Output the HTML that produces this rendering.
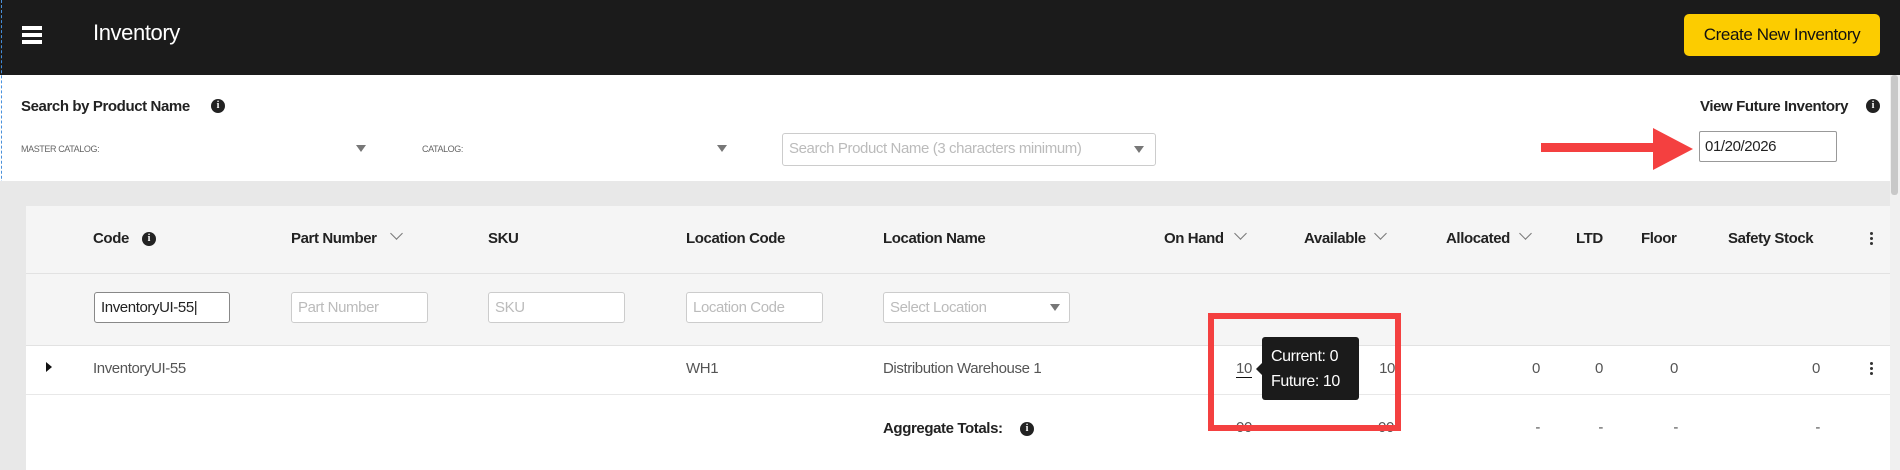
<!DOCTYPE html>
<html><head><meta charset="utf-8"><style>
*{box-sizing:border-box;margin:0;padding:0}
body{width:1900px;height:470px;overflow:hidden;background:#fff;font-family:"Liberation Sans",sans-serif;position:relative;color:#333;letter-spacing:-0.4px}
.a{position:absolute;white-space:nowrap}
.hdr{left:0;top:0;width:1900px;height:75px;background:#1b1b1b}
.th{font-size:15px;font-weight:bold;color:#222;top:230px}
.inp{position:absolute;height:31px;border:1px solid #ccc;border-radius:3px;background:#fff;font-size:15px;color:#bbb;padding:6px 6px;top:292px}
.cell{font-size:15px;color:#555;top:360px}
.tri{width:0;height:0;border-left:5px solid transparent;border-right:5px solid transparent;border-top:7px solid #777;position:absolute}
.info{position:absolute;width:14px;height:14px;border-radius:50%;background:#222;color:#fff;font-size:10px;font-weight:bold;text-align:center;line-height:14px;font-family:"Liberation Serif",serif;letter-spacing:0}
.chev{position:absolute;width:9px;height:9px;border-right:1.5px solid #777;border-bottom:1.5px solid #777;transform:rotate(45deg)}
.num{font-size:15px;color:#555;top:360px;text-align:right;width:40px}
.kb{position:absolute;width:3px}
.kb i{display:block;width:3px;height:3px;background:#333;margin-bottom:2px;border-radius:50%}
</style></head><body>
<div class="a hdr"></div>
<div class="a" style="left:1px;top:0;width:0;height:470px;border-left:1px dashed #4a90d9"></div>
<div class="a" style="left:22px;top:26px;width:20px;height:4px;background:#fff"></div>
<div class="a" style="left:22px;top:33px;width:20px;height:4px;background:#fff"></div>
<div class="a" style="left:22px;top:40px;width:20px;height:4px;background:#fff"></div>
<div class="a" style="left:93px;top:20px;font-size:22px;color:#fff">Inventory</div>
<div class="a" style="left:1684px;top:14px;width:196px;height:42px;background:#fccc00;border-radius:5px;font-size:17px;color:#111;text-align:center;line-height:42px">Create New Inventory</div>
<div class="a" style="left:1890px;top:75px;width:10px;height:395px;background:#f0f0f0"></div>
<div class="a" style="left:1891px;top:75px;width:7px;height:120px;background:#c8c8c8;border-radius:3px"></div>

<div class="a" style="left:21px;top:98px;font-size:15px;font-weight:bold;color:#222">Search by Product Name</div>
<div class="info" style="left:211px;top:99px">i</div>
<div class="a" style="left:21px;top:144px;font-size:9px;color:#666">MASTER CATALOG:</div>
<div class="tri" style="left:356px;top:145px"></div>
<div class="a" style="left:422px;top:144px;font-size:9px;color:#666">CATALOG:</div>
<div class="tri" style="left:717px;top:145px"></div>
<div class="inp" style="left:782px;top:133px;width:374px;height:33px">Search Product Name (3 characters minimum)</div>
<div class="tri" style="left:1134px;top:146px"></div>
<div class="a" style="left:1700px;top:98px;font-size:15px;font-weight:bold;color:#222">View Future Inventory</div>
<div class="info" style="left:1866px;top:99px">i</div>
<div class="a" style="left:1699px;top:131px;width:138px;height:31px;border:1px solid #999;border-radius:2px;font-size:15px;color:#222;padding:6px 5px">01/20/2026</div>
<div class="a" style="left:1541px;top:143px;width:115px;height:9px;background:#f44040"></div>
<div class="a" style="left:1653px;top:128px;width:0;height:0;border-top:21px solid transparent;border-bottom:21px solid transparent;border-left:40px solid #f44040"></div>

<div class="a" style="left:0;top:181px;width:1890px;height:289px;background:#e8e8e8"></div>
<div class="a" style="left:26px;top:206px;width:1864px;height:264px;background:#fff"></div>
<div class="a" style="left:26px;top:206px;width:1864px;height:139px;background:#f5f5f5"></div>
<div class="a" style="left:26px;top:273px;width:1864px;height:1px;background:#e2e2e2"></div>
<div class="a" style="left:26px;top:345px;width:1864px;height:1px;background:#e2e2e2"></div>
<div class="a" style="left:26px;top:394px;width:1864px;height:1px;background:#e8e8e8"></div>

<div class="a th" style="left:93px">Code</div><div class="info" style="left:142px;top:232px">i</div>
<div class="a th" style="left:291px">Part Number</div><div class="chev" style="left:392px;top:229px"></div>
<div class="a th" style="left:488px">SKU</div>
<div class="a th" style="left:686px">Location Code</div>
<div class="a th" style="left:883px">Location Name</div>
<div class="a th" style="left:1164px">On Hand</div><div class="chev" style="left:1236px;top:229px"></div>
<div class="a th" style="left:1304px">Available</div><div class="chev" style="left:1376px;top:229px"></div>
<div class="a th" style="left:1446px">Allocated</div><div class="chev" style="left:1521px;top:229px"></div>
<div class="a th" style="left:1576px">LTD</div>
<div class="a th" style="left:1641px">Floor</div>
<div class="a th" style="left:1728px">Safety Stock</div>
<div class="kb" style="left:1870px;top:232px"><i></i><i></i><i></i></div>

<div class="inp" style="left:94px;width:136px;border-color:#888;color:#222">InventoryUI-55|</div>
<div class="inp" style="left:291px;width:137px">Part Number</div>
<div class="inp" style="left:488px;width:137px">SKU</div>
<div class="inp" style="left:686px;width:137px">Location Code</div>
<div class="inp" style="left:883px;width:187px">Select Location</div>
<div class="tri" style="left:1050px;top:304px"></div>

<div class="a" style="left:46px;top:362px;width:0;height:0;border-top:5px solid transparent;border-bottom:5px solid transparent;border-left:6px solid #111"></div>
<div class="a cell" style="left:93px">InventoryUI-55</div>
<div class="a cell" style="left:686px">WH1</div>
<div class="a cell" style="left:883px">Distribution Warehouse 1</div>
<div class="a cell" style="left:1236px;border-bottom:1px solid #111;line-height:17px">10</div>
<div class="a num" style="left:1355px">10</div>
<div class="a num" style="left:1500px">0</div>
<div class="a num" style="left:1563px">0</div>
<div class="a num" style="left:1638px">0</div>
<div class="a num" style="left:1780px">0</div>
<div class="kb" style="left:1870px;top:362px"><i></i><i></i><i></i></div>

<div class="a" style="left:883px;top:420px;font-size:15px;font-weight:bold;color:#222">Aggregate Totals:</div>
<div class="info" style="left:1020px;top:422px">i</div>
<div class="a cell" style="left:1236px;top:419px">00</div>
<div class="a cell" style="left:1378px;top:419px">00</div>
<div class="a num" style="left:1500px;top:419px">-</div>
<div class="a num" style="left:1563px;top:419px">-</div>
<div class="a num" style="left:1638px;top:419px">-</div>
<div class="a num" style="left:1780px;top:419px">-</div>

<div class="a" style="left:1262px;top:337px;width:97px;height:63px;background:#1b1b1b;border-radius:3px;color:#fff;font-size:16px;padding:7px 9px;line-height:25px">Current: 0<br>Future: 10</div>
<div class="a" style="left:1256px;top:363px;width:0;height:0;border-top:6px solid transparent;border-bottom:6px solid transparent;border-right:6px solid #1b1b1b"></div>
<div class="a" style="left:1208px;top:313px;width:193px;height:118px;border:6px solid #f44040"></div>
</body></html>
